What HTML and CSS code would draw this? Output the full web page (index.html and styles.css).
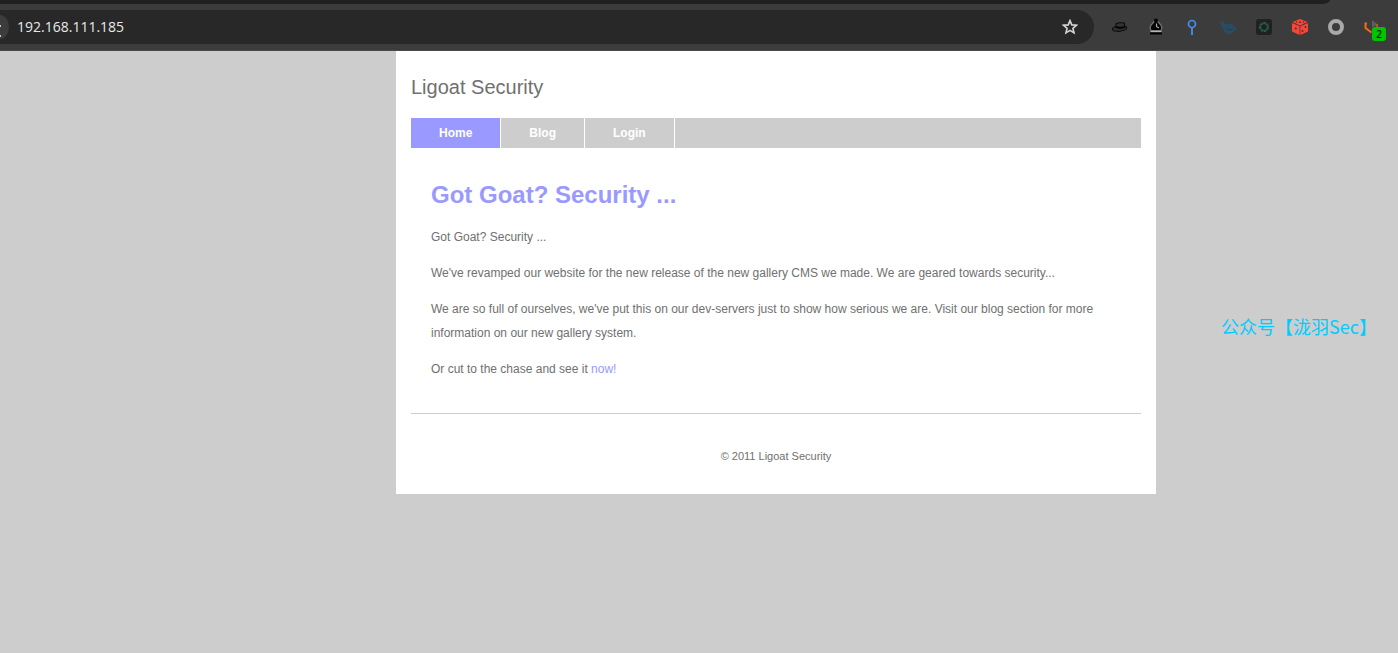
FILE: index.html
```html
<!DOCTYPE html>
<html lang="en">
<head>
<meta charset="utf-8">
<title>Ligoat Security</title>
<link rel="stylesheet" href="styles.css">
</head>
<body>
<div class="tabstrip"><div class="tabstrip-edge"></div></div>
<div class="toolbar">
  <div class="omnibox">
    <span class="site-info"></span>
    <input class="address" type="text" aria-label="Address" value="192.168.111.185">
    <button class="icon-button" type="button" aria-label="Bookmark">
      <svg width="16" height="16" viewBox="0 0 16 16"><path d="M8 1.600l1.800 4.300 4.700.4-3.600 3 1.100 4.600L8 11.400l-4 2.500 1.100-4.600-3.600-3 4.700-.4z" fill="none" stroke="#d6d6d6" stroke-width="1.600"/></svg>
    </button>
  </div>
  <div class="extensions">
    <button class="icon-button" type="button" aria-label="Hat">
      <svg width="16" height="16" viewBox="0 0 16 16"><ellipse cx="7.500" cy="9.500" rx="7.200" ry="2.600" fill="#303030" stroke="#090909" stroke-width="1" transform="rotate(-6 8 9)"/><path d="M4 8.500V4.500Q8 3 12.500 4v4.500Q9 10 4 8.500z" fill="#333" stroke="#080808"/><path d="M4 7q4 1.500 8.500 0v2q-4 1.500-8.500 0z" fill="#050505"/></svg>
    </button>
    <button class="icon-button" type="button" aria-label="Bishop">
      <svg width="18" height="18" viewBox="0 0 18 18"><path d="M9 1.500L5 6Q2 9 4 12.500h10Q16 9 13 6z" fill="#000" stroke="#777" stroke-width="1.200"/><circle cx="9" cy="2.500" r="2" fill="#000"/><path d="M9.500 5.500v3l2.500 1.500" fill="none" stroke="#aaa" stroke-width="1.200"/><path d="M3.500 13.500h11" stroke="#b5b5b5" stroke-width="1.200"/><path d="M3 15.500h12" stroke="#000" stroke-width="2"/></svg>
    </button>
    <button class="icon-button" type="button" aria-label="Pin">
      <svg width="16" height="16" viewBox="0 0 16 16"><circle cx="8" cy="5" r="3.500" fill="none" stroke="#458ff0" stroke-width="1.700"/><path d="M8 8.500V16" stroke="#458ff0" stroke-width="1.800"/></svg>
    </button>
    <button class="icon-button" type="button" aria-label="Whale">
      <svg width="16" height="16" viewBox="0 0 16 16"><path d="M0 3l2.500-.4L4 3l.8 2.200q4.500-1.500 7.700.6l3.300 3q-.5 5-5.500 6.200-6.500.8-7.500-6L0 5z" fill="#294c60"/><path d="M6.500 9.500q3 3 6.500-.5" fill="none" stroke="#203f50"/></svg>
    </button>
    <button class="icon-button" type="button" aria-label="Ring">
      <svg width="16" height="16" viewBox="0 0 16 16"><rect width="16" height="16" rx="2.500" fill="#202221"/><circle cx="8" cy="8" r="4.600" fill="none" stroke="#28674d" stroke-width="1" stroke-dasharray="3 1"/><circle cx="8" cy="8" r="3.500" fill="none" stroke="#2f7557" stroke-width=".8"/></svg>
    </button>
    <button class="icon-button" type="button" aria-label="Dice">
      <svg width="16" height="16" viewBox="0 0 16 16"><path d="M8 0l7.500 3L8 6.500.5 3z" fill="#fb4436"/><path d="M0 4l7.600 3.200V16L0 12.500z" fill="#fb4436"/><path d="M16 4L8.400 7.200V16l7.600-3.500z" fill="#fb4436"/><g fill="#3c3333"><circle cx="8" cy="3.200" r=".9"/><circle cx="4.500" cy="3" r=".7"/><circle cx="11.500" cy="3" r=".7"/><circle cx="3.800" cy="9.500" r="1"/><circle cx="10.500" cy="12" r=".9"/><circle cx="13.500" cy="8" r=".9"/></g></svg>
    </button>
    <button class="icon-button" type="button" aria-label="Circle">
      <svg width="16" height="16" viewBox="0 0 16 16"><circle cx="8" cy="8" r="6" fill="none" stroke="#a9a9a9" stroke-width="4"/></svg>
    </button>
    <button class="icon-button" type="button" aria-label="Box, 2 items">
      <svg width="16" height="16" viewBox="0 0 16 16"><path d="M8 1l6.500 5L8 8z" fill="#5c5c5c"/><path d="M3 4.500H1.500V9l6 4.500" fill="none" stroke="#f36b12" stroke-width="2"/><path d="M12 5h2v4h-2z" fill="#b05a20"/></svg>
      <span class="badge">2</span>
    </button>
  </div>
</div>
<div class="viewport">
  <div class="page">
    <header class="site-name">Ligoat Security</header>
    <nav class="menu">
      <a class="menu-item menu-item-active" href="#">Home</a>
      <a class="menu-item" href="#">Blog</a>
      <a class="menu-item" href="#">Login</a>
    </nav>
    <main class="content">
      <h1 class="title">Got Goat? Security ...</h1>
      <p>Got Goat? Security ...</p>
      <p>We've revamped our website for the new release of the new gallery CMS we made. We are geared towards security...</p>
      <p>We are so full of ourselves, we've put this on our dev-servers just to show how serious we are. Visit our blog section for more information on our new gallery system.</p>
      <p>Or cut to the chase and see it <a class="link" href="#">now!</a></p>
    </main>
    <footer class="footer">© 2011 Ligoat Security</footer>
  </div>
  <div class="watermark" lang="zh-CN">公众号【泷羽Sec】</div>
</div>
</body>
</html>
```

FILE: styles.css
```css
* { box-sizing: border-box; }
body {
  margin: 0;
  min-height: 100vh;
  display: flex;
  flex-direction: column;
  background: #cdcdcd;
  color: #707070;
  font: 12px/24px "Liberation Sans", Arial, sans-serif;
}
.tabstrip { background: #3c3c3c; padding-right: 68px; }
.tabstrip-edge { height: 4px; background: #1f2120; border-bottom-right-radius: 8px 4px; }
.toolbar {
  display: flex;
  align-items: center;
  gap: 14px;
  padding: 6px 14px 6px 0;
  background: #3c3c3c;
  border-bottom: 1px solid #4a4a4a;
}
.omnibox {
  flex: 1;
  display: flex;
  align-items: center;
  height: 34px;
  padding-right: 12px;
  background: #282828;
  border-radius: 0 17px 17px 0;
}
.site-info {
  width: 9px;
  height: 24px;
  background: #3c3c3c;
  border-radius: 0 9px 9px 0 / 0 12px 12px 0;
}
.site-info::before {
  content: "";
  display: block;
  width: 1px;
  height: 8px;
  margin-top: 10px;
  border-top: 2px solid #c8c8c8;
  border-bottom: 2px solid #c8c8c8;
}
.address {
  flex: 1;
  min-width: 0;
  height: 24px;
  padding: 0 0 2px 8px;
  border: 0;
  outline: 0;
  background: none;
  color: #e8e8e8;
  font: 14px "Open Sans", sans-serif;
}
.extensions { display: flex; gap: 12px; }
.icon-button {
  position: relative;
  display: flex;
  align-items: center;
  justify-content: center;
  width: 24px;
  height: 24px;
  padding: 0;
  border: 0;
  background: none;
}
.badge {
  position: absolute;
  right: -2px;
  bottom: -2px;
  width: 14px;
  height: 14px;
  border-radius: 3px;
  background: #00c400;
  color: #0a200a;
  font: 600 10px/14px "Open Sans", sans-serif;
}
.viewport { position: relative; flex: 1; padding-left: 154px; }
.page {
  max-width: 760px;
  margin: 0 auto;
  padding: 0 15px 26px;
  background: #fff;
}
.site-name { padding: 24px 0 19px; font-size: 20px; }
.menu { display: flex; background: #cdcdcd; }
.menu-item {
  padding: 0 28px;
  border-right: 1px solid #fff;
  color: #fff;
  font-weight: bold;
  line-height: 30px;
  text-decoration: none;
}
.menu-item-active { background: #99f; }
.content { padding: 32px 20px; border-bottom: 1px solid #cdcdcd; }
.content p { margin: 0 0 12px; }
.content p:last-child { margin-bottom: 0; }
.title { margin: 0 0 15px; color: #99f; font-size: 24px; line-height: 30px; }
.link { color: #99f; text-decoration: none; }
.footer { padding-top: 30px; text-align: center; font-size: 11px; }
.watermark {
  position: absolute;
  right: 21px;
  top: 263px;
  color: #00ccff;
  font: 18px/24px "Noto Sans CJK SC", sans-serif;
}
```
